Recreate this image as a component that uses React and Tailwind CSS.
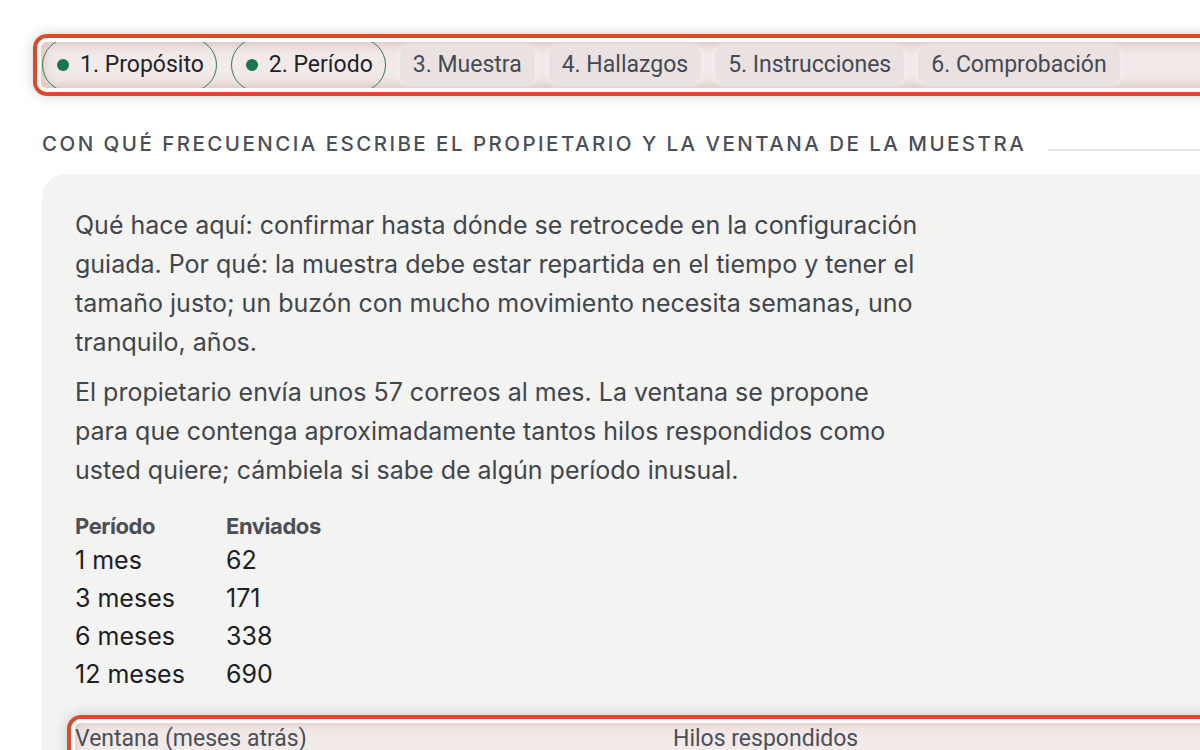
import React from "react";

const inter = { fontFamily: "Inter, 'Noto Sans', sans-serif" };
const roboto = { fontFamily: "Roboto, 'Liberation Sans', sans-serif" };

function ActiveTab({ label }) {
  return (
    <div className="shrink-0 h-[54px] flex items-center gap-[11px] pl-[14px] pr-[12px] rounded-full border-[1.5px] border-[#2f7a55] text-[#1f2328] text-[23px]" style={roboto}>
      <span className="w-[12px] h-[12px] rounded-full bg-[#17774f] shrink-0" />
      <span>{label}</span>
    </div>
  );
}

function Tab({ label }) {
  return (
    <div className="shrink-0 h-[40px] flex items-center px-[13px] rounded-[10px] bg-[#e9e2e1] shadow-[0_0_6px_rgba(255,255,255,0.6)] text-[#444a55] text-[23px]" style={roboto}>
      {label}
    </div>
  );
}

export default function App() {
  const rows = [
    ["1 mes", "62"],
    ["3 meses", "171"],
    ["6 meses", "338"],
    ["12 meses", "690"],
  ];
  return (
    <div className="w-[1200px] h-[750px] overflow-hidden bg-white">
      <div className="w-[1320px] pl-[42px] pt-[34px]">
        {/* tab bar highlight */}
        <div className="-ml-[9px] rounded-[14px] border-[4px] border-[#dc4a2c] shadow-[0_0_14px_rgba(0,0,0,0.18)]">
          <div className="rounded-[10px] border-[4px] border-white">
            <div className="h-[46px] overflow-hidden rounded-[6px] bg-[#f1eae9] shadow-[inset_0_0_14px_rgba(170,90,80,0.4)] flex items-center gap-[14px] pl-[1px]">
              <ActiveTab label="1. Propósito" />
              <ActiveTab label="2. Período" />
              <Tab label="3. Muestra" />
              <Tab label="4. Hallazgos" />
              <Tab label="5. Instrucciones" />
              <Tab label="6. Comprobación" />
            </div>
          </div>
        </div>

        {/* heading */}
        <div className="flex items-center mt-[34px]">
          <h2 className="text-[20.5px] leading-[28px] font-medium tracking-[0.12em] text-[#4a4f57] whitespace-nowrap" style={inter}>
            CON QUÉ FRECUENCIA ESCRIBE EL PROPIETARIO Y LA VENTANA DE LA MUESTRA
          </h2>
          <div className="flex-1 h-[2px] bg-[#e6e6e6] ml-[22px] mt-[12px]" />
        </div>

        {/* card */}
        <div className="mt-[16px] rounded-[24px] bg-[#f3f3f1] pt-[32px] pl-[33px] pb-[40px]" style={inter}>
          <p className="w-[850px] text-[25px] leading-[39px] text-[#41464d]">
            Qué hace aquí: confirmar hasta dónde se retrocede en la configuración guiada. Por qué: la muestra debe estar repartida en el tiempo y tener el tamaño justo; un buzón con mucho movimiento necesita semanas, uno tranquilo, años.
          </p>
          <p className="w-[850px] mt-[11px] text-[25px] leading-[39px] text-[#41464d]">
            El propietario envía unos 57 correos al mes. La ventana se propone para que contenga aproximadamente tantos hilos respondidos como usted quiere; cámbiela si sabe de algún período inusual.
          </p>

          <div className="mt-[20px]">
            <div className="flex h-[32px] items-center text-[22px] font-bold tracking-[-0.02em] text-[#4a4f57]">
              <div className="w-[151px]">Período</div>
              <div>Enviados</div>
            </div>
            {rows.map(([a, b]) => (
              <div key={a} className="flex h-[38px] items-center text-[25px] text-[#1d2024]">
                <div className="w-[151px]">{a}</div>
                <div>{b}</div>
              </div>
            ))}
          </div>

          {/* bottom highlight */}
          <div className="mt-[21px] -ml-[8px] rounded-[14px] border-[4px] border-[#dc4a2c] shadow-[0_0_14px_rgba(0,0,0,0.18)]">
            <div className="rounded-[10px] border-[4px] border-white">
              <div className="h-[60px] rounded-[6px] bg-[#f1eae9] shadow-[inset_0_0_12px_rgba(170,90,80,0.3)] flex items-start text-[23px] leading-[32px] text-[#4b4f56]" style={roboto}>
                <div className="w-[598px]">Ventana (meses atrás)</div>
                <div>Hilos respondidos</div>
              </div>
            </div>
          </div>
        </div>
      </div>
    </div>
  );
}
